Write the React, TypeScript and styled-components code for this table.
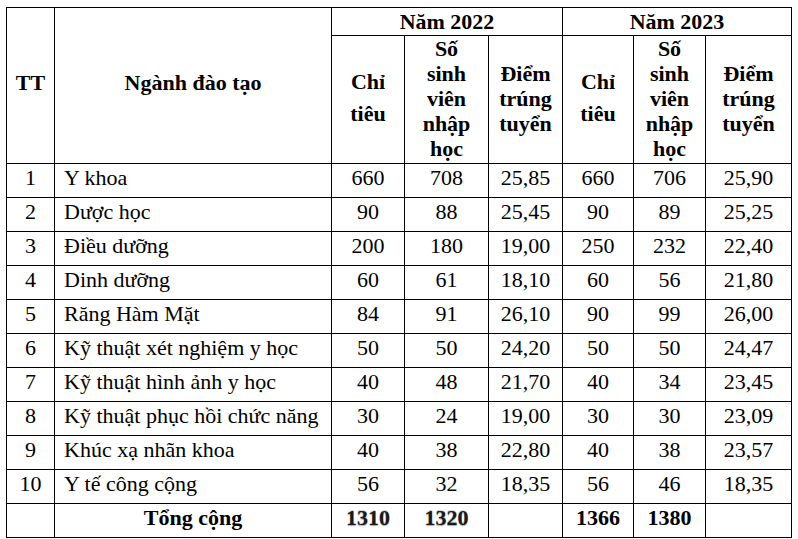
import React from "react";
import styled, { createGlobalStyle } from "styled-components";

const GlobalStyle = createGlobalStyle`
  html, body {
    margin: 0;
    padding: 0;
    background: #ffffff;
  }
  body {
    font-family: "Liberation Serif", "Times New Roman", serif;
    color: #000000;
  }
`;

const Page = styled.div`
  padding: 7px 0 0 6px;
`;

const Table = styled.table`
  width: 785px;
  table-layout: fixed;
  border-collapse: collapse;
  font-size: 22px;
`;

const Th = styled.th<{ $wide?: boolean; $lift?: number }>`
  border: 1px solid #000;
  font-weight: bold;
  line-height: ${(p) => (p.$wide ? "32px" : "25px")};
  padding: 0 0 ${(p) => p.$lift ?? 0}px 0;
  text-align: center;
  vertical-align: middle;
`;

const YearRow = styled.tr`
  height: 28px;
`;

const SubRow = styled.tr`
  height: 128px;
`;

const DataRow = styled.tr`
  height: 34px;
`;

const Td = styled.td<{ $left?: boolean; $bold?: boolean; $smudge?: boolean; $softLeft?: boolean }>`
  border: 1px solid #000;
  ${(p) => (p.$softLeft ? "border-left-color: #c8c8c8;" : "")}
  padding: 0 0 6px ${(p) => (p.$left ? "9px" : "0")};
  text-align: ${(p) => (p.$left ? "left" : "center")};
  font-weight: ${(p) => (p.$bold ? "bold" : "normal")};
  line-height: 25px;
  white-space: nowrap;
  ${(p) =>
    p.$smudge
      ? "color: #1a1a1a; text-shadow: 0 1px 1px rgba(0,0,0,0.35), 0 -1px 1px rgba(0,0,0,0.2);"
      : ""}
`;

type Row = [string, string, string, string, string, string, string, string];

const rows: Row[] = [
  ["1", "Y khoa", "660", "708", "25,85", "660", "706", "25,90"],
  ["2", "Dược học", "90", "88", "25,45", "90", "89", "25,25"],
  ["3", "Điều dưỡng", "200", "180", "19,00", "250", "232", "22,40"],
  ["4", "Dinh dưỡng", "60", "61", "18,10", "60", "56", "21,80"],
  ["5", "Răng Hàm Mặt", "84", "91", "26,10", "90", "99", "26,00"],
  ["6", "Kỹ thuật xét nghiệm y học", "50", "50", "24,20", "50", "50", "24,47"],
  ["7", "Kỹ thuật hình ảnh y học", "40", "48", "21,70", "40", "34", "23,45"],
  ["8", "Kỹ thuật phục hồi chức năng", "30", "24", "19,00", "30", "30", "23,09"],
  ["9", "Khúc xạ nhãn khoa", "40", "38", "22,80", "40", "38", "23,57"],
  ["10", "Y tế công cộng", "56", "32", "18,35", "56", "46", "18,35"],
];

const SubHeads = () => (
  <>
    <Th $wide $lift={4}>
      Chỉ
      <br />
      tiêu
    </Th>
    <Th $lift={2}>
      Số
      <br />
      sinh
      <br />
      viên
      <br />
      nhập
      <br />
      học
    </Th>
    <Th $lift={2}>
      Điểm
      <br />
      trúng
      <br />
      tuyển
    </Th>
  </>
);

const App = () => {
  return (
    <>
      <GlobalStyle />
      <Page>
        <Table>
          <colgroup>
            <col style={{ width: 48 }} />
            <col style={{ width: 277 }} />
            <col style={{ width: 73 }} />
            <col style={{ width: 84 }} />
            <col style={{ width: 74 }} />
            <col style={{ width: 71 }} />
            <col style={{ width: 72 }} />
            <col style={{ width: 86 }} />
          </colgroup>
          <thead>
            <YearRow>
              <Th rowSpan={2} $lift={6}>
                TT
              </Th>
              <Th rowSpan={2} $lift={6}>
                Ngành đào tạo
              </Th>
              <Th colSpan={3}>Năm 2022</Th>
              <Th colSpan={3}>Năm 2023</Th>
            </YearRow>
            <SubRow>
              <SubHeads />
              <SubHeads />
            </SubRow>
          </thead>
          <tbody>
            {rows.map((r) => (
              <DataRow key={r[0]}>
                <Td>{r[0]}</Td>
                <Td $left>{r[1]}</Td>
                <Td>{r[2]}</Td>
                <Td>{r[3]}</Td>
                <Td>{r[4]}</Td>
                <Td>{r[5]}</Td>
                <Td>{r[6]}</Td>
                <Td>{r[7]}</Td>
              </DataRow>
            ))}
            <DataRow>
              <Td />
              <Td $bold>Tổng cộng</Td>
              <Td $bold $smudge $softLeft>
                1310
              </Td>
              <Td $bold $smudge>
                1320
              </Td>
              <Td />
              <Td $bold>1366</Td>
              <Td $bold>1380</Td>
              <Td />
            </DataRow>
          </tbody>
        </Table>
      </Page>
    </>
  );
};

export default App;
